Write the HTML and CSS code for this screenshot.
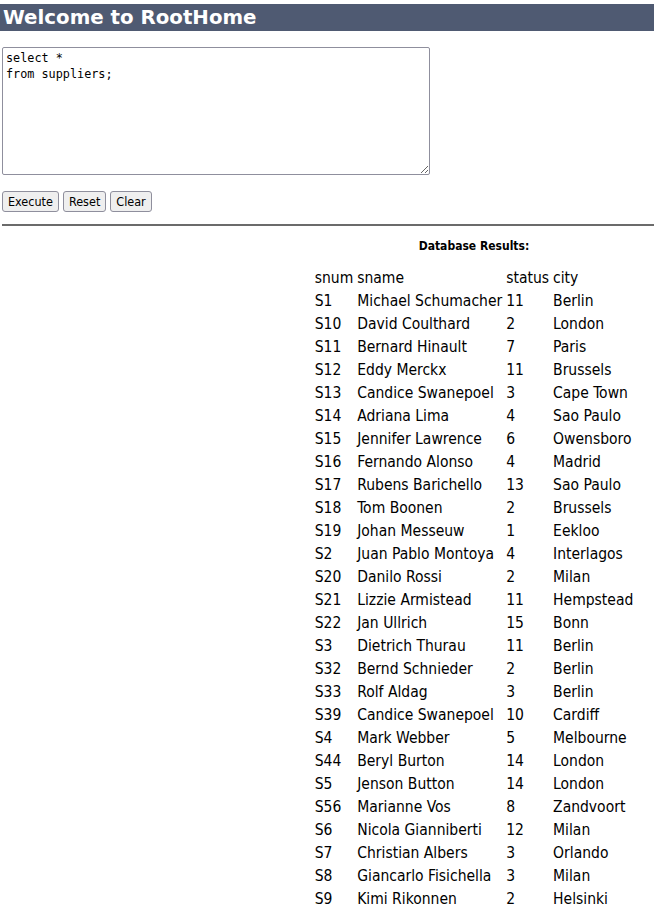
FILE: index.html
```html
<!DOCTYPE html>
<html>
<head>
<meta charset="utf-8">
<title>RootHome</title>
<link rel="stylesheet" href="styles.css">
</head>
<body>
<header class="banner">Welcome to RootHome</header>
<main class="page">
  <form class="query">
    <textarea class="sql" spellcheck="false">select *
from suppliers;</textarea>
    <div class="actions">
      <button type="button" class="btn">Execute</button>
      <button type="button" class="btn">Reset</button>
      <button type="button" class="btn">Clear</button>
    </div>
  </form>
  <hr class="rule">
  <section class="results">
    <div class="caption">Database Results:</div>
    <table class="grid">
      <thead>
        <tr><th>snum</th><th>sname</th><th>status</th><th>city</th></tr>
      </thead>
      <tbody>
        <tr><td>S1</td><td>Michael Schumacher</td><td>11</td><td>Berlin</td></tr>
        <tr><td>S10</td><td>David Coulthard</td><td>2</td><td>London</td></tr>
        <tr><td>S11</td><td>Bernard Hinault</td><td>7</td><td>Paris</td></tr>
        <tr><td>S12</td><td>Eddy Merckx</td><td>11</td><td>Brussels</td></tr>
        <tr><td>S13</td><td>Candice Swanepoel</td><td>3</td><td>Cape Town</td></tr>
        <tr><td>S14</td><td>Adriana Lima</td><td>4</td><td>Sao Paulo</td></tr>
        <tr><td>S15</td><td>Jennifer Lawrence</td><td>6</td><td>Owensboro</td></tr>
        <tr><td>S16</td><td>Fernando Alonso</td><td>4</td><td>Madrid</td></tr>
        <tr><td>S17</td><td>Rubens Barichello</td><td>13</td><td>Sao Paulo</td></tr>
        <tr><td>S18</td><td>Tom Boonen</td><td>2</td><td>Brussels</td></tr>
        <tr><td>S19</td><td>Johan Messeuw</td><td>1</td><td>Eekloo</td></tr>
        <tr><td>S2</td><td>Juan Pablo Montoya</td><td>4</td><td>Interlagos</td></tr>
        <tr><td>S20</td><td>Danilo Rossi</td><td>2</td><td>Milan</td></tr>
        <tr><td>S21</td><td>Lizzie Armistead</td><td>11</td><td>Hempstead</td></tr>
        <tr><td>S22</td><td>Jan Ullrich</td><td>15</td><td>Bonn</td></tr>
        <tr><td>S3</td><td>Dietrich Thurau</td><td>11</td><td>Berlin</td></tr>
        <tr><td>S32</td><td>Bernd Schnieder</td><td>2</td><td>Berlin</td></tr>
        <tr><td>S33</td><td>Rolf Aldag</td><td>3</td><td>Berlin</td></tr>
        <tr><td>S39</td><td>Candice Swanepoel</td><td>10</td><td>Cardiff</td></tr>
        <tr><td>S4</td><td>Mark Webber</td><td>5</td><td>Melbourne</td></tr>
        <tr><td>S44</td><td>Beryl Burton</td><td>14</td><td>London</td></tr>
        <tr><td>S5</td><td>Jenson Button</td><td>14</td><td>London</td></tr>
        <tr><td>S56</td><td>Marianne Vos</td><td>8</td><td>Zandvoort</td></tr>
        <tr><td>S6</td><td>Nicola Gianniberti</td><td>12</td><td>Milan</td></tr>
        <tr><td>S7</td><td>Christian Albers</td><td>3</td><td>Orlando</td></tr>
        <tr><td>S8</td><td>Giancarlo Fisichella</td><td>3</td><td>Milan</td></tr>
        <tr><td>S9</td><td>Kimi Rikonnen</td><td>2</td><td>Helsinki</td></tr>
      </tbody>
    </table>
  </section>
</main>
</body>
</html>
```

FILE: styles.css
```css
html, body {
  margin: 0;
  padding: 0;
  background: #ffffff;
  color: #000000;
  font-family: "DejaVu Sans Condensed", "DejaVu Sans", sans-serif;
}

.banner {
  margin-top: 4px;
  height: 27px;
  line-height: 27px;
  padding-left: 3px;
  background: #4f5a72;
  color: #ffffff;
  font-family: "DejaVu Sans", sans-serif;
  font-weight: bold;
  font-size: 19.8px;
  white-space: nowrap;
}

.page {
  padding-left: 2px;
}

.query {
  margin: 16px 0 0 0;
}

.sql {
  display: block;
  box-sizing: border-box;
  width: 428px;
  height: 128px;
  margin: 0;
  padding: 2px 3px;
  border: 1px solid #8f8f9d;
  border-radius: 2px;
  font-family: "DejaVu Sans Mono", monospace;
  font-size: 11.8px;
  line-height: 16px;
  color: #000;
  resize: both;
}

.actions {
  display: flex;
  gap: 4px;
  margin-top: 16px;
}

.btn {
  box-sizing: border-box;
  height: 21px;
  margin: 0;
  padding: 0 5px;
  border: 1px solid #8f8f9d;
  border-radius: 3px;
  background: #efefef;
  color: #000;
  font-family: "DejaVu Sans Condensed", "DejaVu Sans", sans-serif;
  font-size: 12.5px;
}

.rule {
  margin: 12px 0 0 0;
  height: 0;
  border: 0;
  border-top: 2px solid #6b6b6b;
}

.results {
  margin-left: 292px;
  display: flex;
  flex-direction: column;
  align-items: center;
}

.caption {
  margin-top: 12px;
  font-size: 12px;
  font-weight: bold;
  line-height: 16px;
}

.grid {
  margin-top: 12px;
  border-spacing: 2px;
  font-size: 15.5px;
}

.grid th,
.grid td {
  padding: 1px;
  text-align: left;
  font-weight: normal;
  line-height: 19px;
  white-space: nowrap;
}
```
